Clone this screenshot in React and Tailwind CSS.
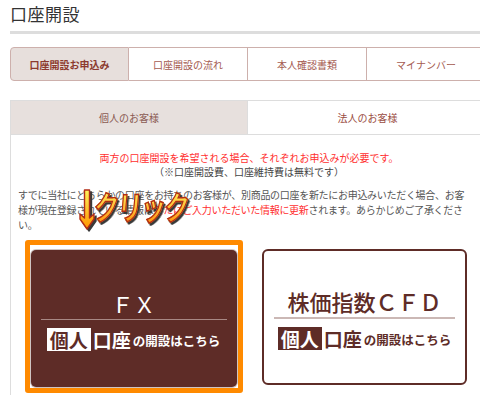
import React from 'react';

const tabs = ["口座開設お申込み", "口座開設の流れ", "本人確認書類", "マイナンバー"];

const Click = () => (
  <div className="absolute inset-0 pointer-events-none">
    <svg className="absolute left-[60px] top-[1px] drop-shadow-[2px_2px_0_#3a3a3a]" width="18" height="44" viewBox="0 0 18 44">
      <defs>
        <linearGradient id="ar" x1="0" y1="0" x2="0" y2="1">
          <stop offset="0" stopColor="#fff35a" />
          <stop offset="1" stopColor="#ff9200" />
        </linearGradient>
      </defs>
      <path d="M6.5 2 L11.5 2 L11.5 30 L16 26 L16 31 L9 41 L2 31 L2 26 L6.5 30 Z" fill="url(#ar)" stroke="#b22c16" strokeWidth="1.4" strokeLinejoin="round" />
    </svg>
    <div className="absolute left-[76px] top-[1px] origin-left scale-x-[0.76] drop-shadow-[2px_2px_0_#3a3a3a]">
      <span className="block text-[33px] leading-[36px] font-bold tracking-[-2px] -skew-x-6 bg-gradient-to-b from-[#fff35a] to-[#ff9200] bg-clip-text text-transparent [-webkit-text-stroke:1.5px_#b22c16]">クリック</span>
    </div>
  </div>
);

const KojinRow = ({ dark }) => (
  <div className="mt-[8px] flex items-center justify-center">
    <span className={"px-[3px] h-[23px] flex items-center text-[19px] font-bold leading-none " + (dark ? "bg-white text-[#5e2c27]" : "bg-[#5e2c27] text-white")}>個人</span>
    <span className={"ml-[2px] text-[19px] font-bold leading-none " + (dark ? "text-white" : "text-[#5e2c27]")}>口座</span>
    <span className={"ml-[2px] mt-[3px] text-[12.5px] font-bold leading-none " + (dark ? "text-white" : "text-[#5e2c27]")}>の開設はこちら</span>
  </div>
);

export default function App() {
  return (
    <div className="w-[480px] h-[395px] overflow-hidden bg-white font-['Noto_Sans_CJK_JP','Noto_Sans',sans-serif]">
      <div className="pl-[10px] w-[487px]">
        <h1 className="pt-[2px] text-[17px] leading-[24px] text-[#333] tracking-[0.5px]">口座開設</h1>
        <div className="mt-[5px] h-[3px] bg-[#dddddd]"></div>

        <div className="mt-[13px] flex h-[34px]">
          {tabs.map((t, i) => (
            <div
              key={t}
              className={
                "w-[119px] shrink-0 flex items-center justify-center text-[10px] border-y border-r border-[#cdb0ac] " +
                (i === 0 ? "border-l rounded-l-[4px] bg-[#e7dfdc] text-[#8c3a2e] font-bold" : "bg-white text-[#a45a50]")
              }
            >
              {t}
            </div>
          ))}
        </div>

        <div className="mt-[19px] border-l border-t border-[#dddddd] h-[300px]">
          <div className="flex h-[34px] border-b border-[#dddddd]">
            <div className="w-[237px] bg-[#e7e0dd] flex items-center justify-center text-[10px] text-[#8a5a52] border-r border-[#dddddd]">個人のお客様</div>
            <div className="flex-1 flex items-center justify-center text-[10px] text-[#9a4c42]">法人のお客様</div>
          </div>

          <div className="px-[7px] pt-[16px]">
            <p className="text-center text-[10px] leading-[14px] text-[#ff2f2f]">両方の口座開設を希望される場合、それぞれお申込みが必要です。</p>
            <p className="text-center text-[10px] leading-[14px] text-[#444]">（※口座開設費、口座維持費は無料です）</p>

            <div className="relative mt-[8px] text-[10px] leading-[15px] text-[#555] tracking-[-0.3px] whitespace-nowrap">
              <div>すでに当社にどちらかの口座をお持ちのお客様が、別商品の口座を新たにお申込みいただく場合、お客</div>
              <div>
                様が現在登録されている情報は<span className="text-[#ff2f2f]">新たにご入力いただいた情報に更新</span>されます。あらかじめご了承くださ
              </div>
              <div>い。</div>
              <Click />
            </div>

            <div className="mt-[8px] grid grid-cols-2">
              <div className="flex justify-center">
                <div className="border-[5px] border-[#ff8a00] rounded-[3px] px-[1px] pt-[5px] pb-[1px] bg-white">
                  <div className="w-[206px] h-[137px] rounded-[5px] bg-[#5e2c27] ring-1 ring-[#cfc4c2] pt-[40px] px-[10px]">
                    <div className="text-center text-white text-[22px] leading-[26px]">ＦＸ</div>
                    <div className="mt-[3px] h-[1px] bg-[#a88884]"></div>
                    <KojinRow dark />
                  </div>
                </div>
              </div>
              <div className="flex justify-center pt-[9px]">
                <div className="w-[205px] h-[136px] rounded-[6px] border-2 border-[#5e2c27] bg-white pt-[37px] px-[10px]">
                  <div className="text-center text-[#5e2c27] text-[22px] leading-[26px] font-medium">株価指数ＣＦＤ</div>
                  <div className="mt-[3px] h-[2px] bg-[#cbb8b5]"></div>
                  <KojinRow />
                </div>
              </div>
            </div>
          </div>
        </div>
      </div>
    </div>
  );
}
